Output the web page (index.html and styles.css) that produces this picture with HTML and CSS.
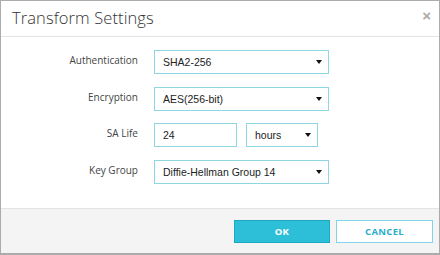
FILE: index.html
```html
<!DOCTYPE html>
<html>
<head>
<meta charset="utf-8">
<link rel="stylesheet" href="styles.css">
</head>
<body>
<div class="dialog">
  <div class="header">
    <div class="title">Transform Settings</div>
    <div class="close">&#215;</div>
  </div>
  <div class="body">
    <div class="row">
      <div class="label">Authentication</div>
      <div class="select wide"><span>SHA2-256</span><span class="caret"></span></div>
    </div>
    <div class="row">
      <div class="label">Encryption</div>
      <div class="select wide"><span>AES(256-bit)</span><span class="caret"></span></div>
    </div>
    <div class="row">
      <div class="label">SA Life</div>
      <div class="input"><span>24</span></div>
      <div class="select short"><span>hours</span><span class="caret"></span></div>
    </div>
    <div class="row">
      <div class="label">Key Group</div>
      <div class="select wide"><span>Diffie-Hellman Group 14</span><span class="caret"></span></div>
    </div>
  </div>
  <div class="footer">
    <div class="btn ok">OK</div>
    <div class="btn cancel">CANCEL</div>
  </div>
</div>
</body>
</html>
```
FILE: styles.css
```css
html, body { margin: 0; padding: 0; background: #fff; }
.dialog {
  width: 440px; height: 255px; box-sizing: border-box;
  border: 1px solid #ababab; border-bottom-width: 2px;
  display: flex; flex-direction: column;
  font-family: "Liberation Sans", Arial, sans-serif;
}
.header {
  height: 36px; box-sizing: border-box;
  border-bottom: 1px solid #e3e3e3;
  display: flex; align-items: center; justify-content: space-between;
  padding: 0 8px 0 11px;
}
.title {
  font-family: "Open Sans", sans-serif; font-weight: 300;
  font-size: 16.5px; color: #333; letter-spacing: 0.1px;
  margin-top: -2px;
}
.close { color: #aaa; font-size: 15px; font-weight: bold; margin-top: -6px; }
.body {
  flex: 1; display: flex; flex-direction: column; gap: 12.7px;
  padding-top: 13px;
  border-bottom: 1px solid #e3e3e3;
}
.row { display: flex; align-items: center; height: 24px; }
.label {
  width: 137px; text-align: right; padding-right: 16px; box-sizing: content-box;
  font-family: "Open Sans", sans-serif; font-size: 10px; color: #444;
  margin-top: -4px;
}
.select, .input {
  height: 24px; box-sizing: border-box;
  border: 1px solid #8ed8e6; background: #fff;
  display: flex; align-items: center; justify-content: space-between;
  padding: 0 6px 0 8px;
  font-size: 10.5px; color: #222;
}
.wide { width: 175px; }
.input { width: 83px; }
.short { width: 72px; margin-left: 9px; }
.caret {
  width: 0; height: 0;
  border-left: 3px solid transparent; border-right: 3px solid transparent;
  border-top: 4px solid #111;
}
.footer {
  height: 44px; background: #f4f4f4;
  display: flex; justify-content: flex-end; align-items: center;
  gap: 6px; padding-right: 6px; padding-top: 1px; box-sizing: border-box;
}
.btn {
  width: 96px; height: 23px; box-sizing: border-box;
  display: flex; align-items: center; justify-content: center;
  font-family: "Open Sans", sans-serif; font-weight: 700; font-size: 9.5px;
  letter-spacing: 0.3px;
}
.ok { background: #2ebfd8; border: 1px solid #1ea7c0; color: #fff; }
.cancel { background: #fff; border: 1px solid #7fd6e6; color: #2aaecb; width: 97px; }
```
